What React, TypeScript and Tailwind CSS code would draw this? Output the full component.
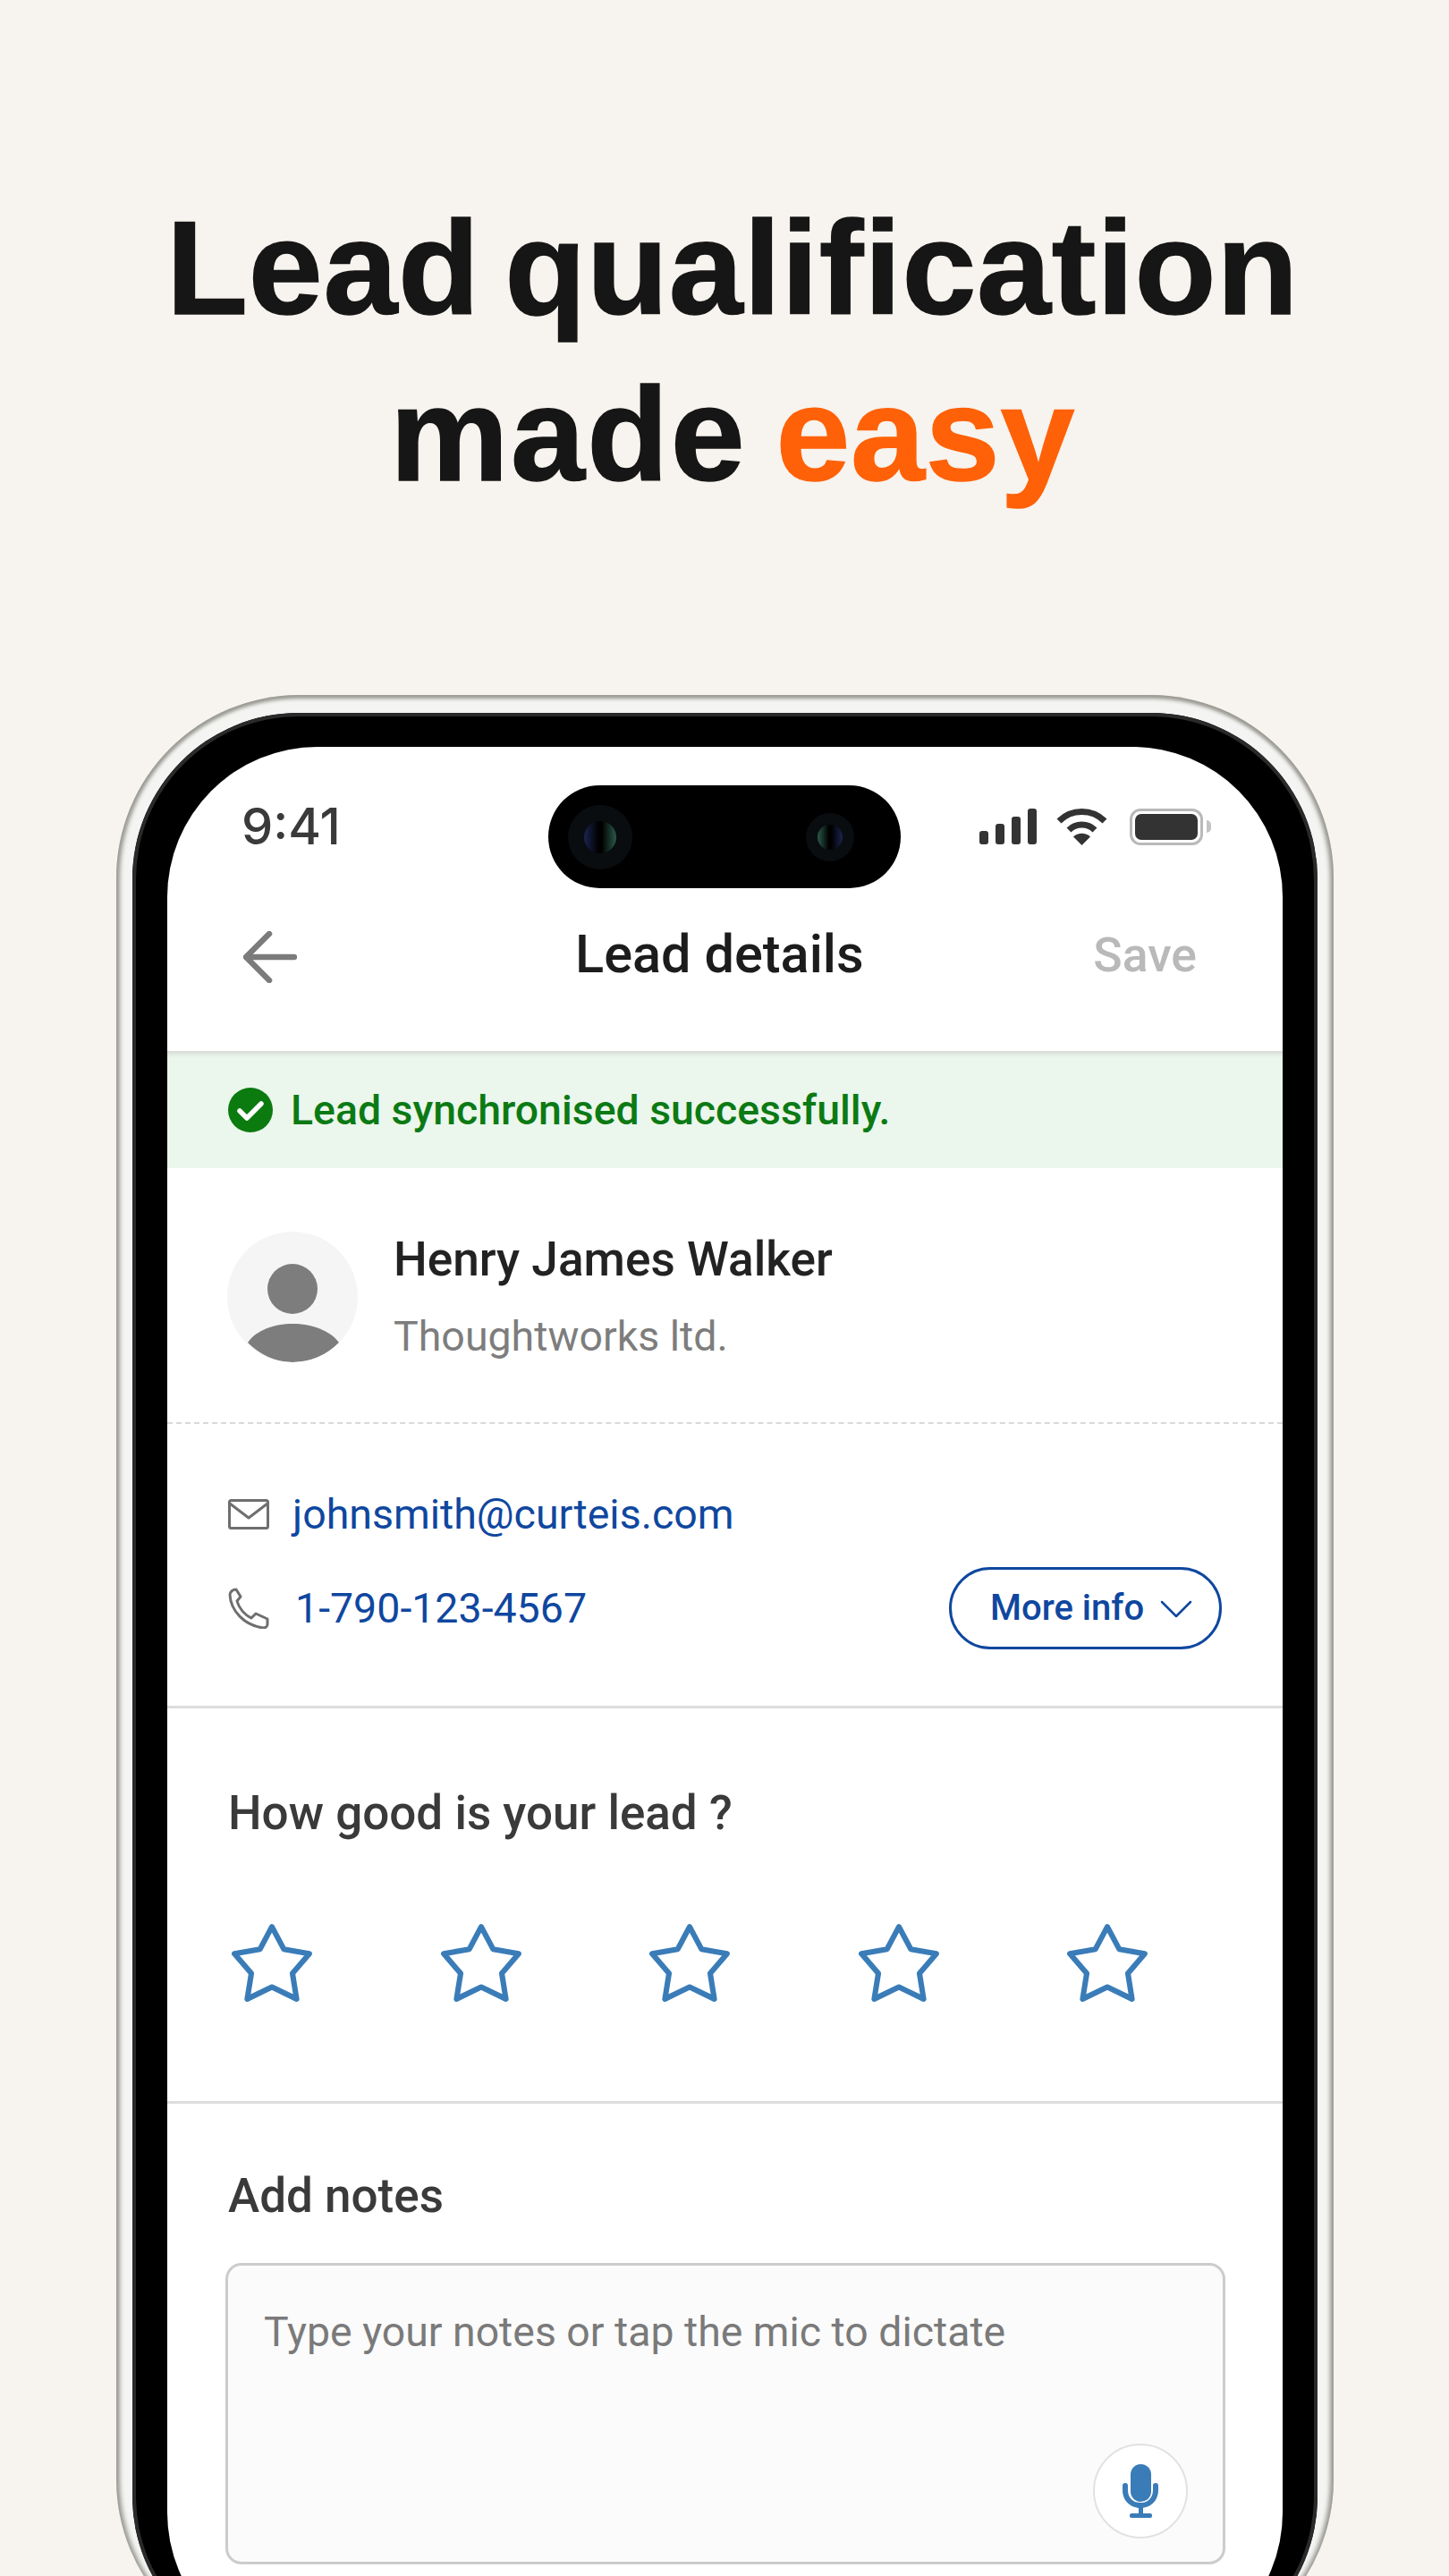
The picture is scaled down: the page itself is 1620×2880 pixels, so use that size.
const roboto = "font-['Roboto',sans-serif]";

const StatusIcons = () => (
  <div className="flex items-center">
    <svg width="64" height="40" viewBox="0 0 64 40" fill="#333">
      <rect x="0" y="25" width="10" height="15" rx="3" />
      <rect x="18" y="17" width="10" height="23" rx="3" />
      <rect x="36" y="9" width="10" height="31" rx="3" />
      <rect x="54" y="0" width="10" height="40" rx="3" />
    </svg>
    <svg className="ml-[22px]" width="57" height="41" viewBox="0 0 57 41" fill="none" stroke="#333" strokeWidth="7">
      <path d="M3 14C17 0 40 0 54 14" />
      <path d="M14 24C22 16 35 16 43 24" />
      <path d="M28.5 41L19 31.5C24 26.5 33 26.5 38 31.5Z" fill="#333" stroke="none" />
    </svg>
    <div className="ml-[25px] w-[82px] h-[41px] rounded-[12px] border-[3px] border-[#b9b9b9] p-[3px]">
      <div className="w-full h-full rounded-[7px] bg-[#333]" />
    </div>
    <div className="ml-[4px] w-[5px] h-[14px] rounded-r-full bg-[#c4c4c4]" />
  </div>
);

const BackArrow = () => (
  <svg width="60" height="58" viewBox="0 0 60 58" fill="none" stroke="#7b7b7b" strokeWidth="6.5" strokeLinecap="round" strokeLinejoin="round">
    <path d="M57 29H4" />
    <path d="M29 3L3 29L29 55" />
  </svg>
);

const CheckBadge = () => (
  <svg width="50" height="50" viewBox="0 0 50 50">
    <circle cx="25" cy="25" r="25" fill="#0b7a0f" />
    <path d="M13 26L21 34L37 18" fill="none" stroke="#fff" strokeWidth="5.5" strokeLinecap="round" strokeLinejoin="round" />
  </svg>
);

const Avatar = () => (
  <div className="w-[146px] h-[146px] rounded-full bg-[#f5f5f5] overflow-hidden shrink-0">
    <svg width="146" height="146" viewBox="0 0 146 146" fill="#7d7d7d">
      <circle cx="73" cy="64" r="28" />
      <path d="M23 124C42 96 104 96 125 124C112 137 94 146 73 146C54 146 36 137 23 124Z" />
    </svg>
  </div>
);

const MailIcon = () => (
  <svg width="46" height="34" viewBox="0 0 46 34" fill="none" stroke="#6f6f6f" strokeWidth="3" strokeLinejoin="round">
    <rect x="1.5" y="1.5" width="43" height="31" rx="2" />
    <path d="M2 5L23 21L44 5" />
  </svg>
);

const PhoneIcon = () => (
  <svg width="46" height="46" viewBox="0 0 46 46" fill="none" stroke="#6f6f6f" strokeWidth="3" strokeLinejoin="round">
    <path d="M2 8C2 5 5 2 9 2L14 10L10 15C12 23 19 31 26 34L31 29L44 35V41C44 43 42 45 39 45C18 42 3 26 2 8Z" />
  </svg>
);

const ChevronIcon = () => (
  <svg width="36" height="20" viewBox="0 0 36 20" fill="none" stroke="#0f479f" strokeWidth="2.5" strokeLinecap="round" strokeLinejoin="round">
    <path d="M2 2L18 18L34 2" />
  </svg>
);

const StarIcon = () => (
  <svg width="94" height="88" viewBox="0 0 92 86" fill="none" stroke="#3a7cb8" strokeWidth="6" strokeLinejoin="round">
    <path d="M46 4L59 28.5L87 33.5L68.5 55L73 83L46 70L19 83L23.5 55L5 33.5L33 28.5Z" />
  </svg>
);

const MicIcon = () => (
  <svg width="40" height="60" viewBox="0 0 40 60" fill="#3a7cb8">
    <rect x="9" y="0" width="23" height="42" rx="11.5" />
    <path d="M3 24V29C3 39 10 46 20 46C30 46 37 39 37 29V24" fill="none" stroke="#3a7cb8" strokeWidth="6" strokeLinecap="round" />
    <rect x="18" y="45" width="5" height="12" />
    <rect x="8" y="55" width="25" height="5" rx="2" />
  </svg>
);

const App = () => {
  return (
    <div className="w-[1620px] h-[2880px] overflow-hidden bg-[#f7f3ee]">
      <h1 className="pt-[207px] pl-[18px] text-center text-[149px] leading-[186px] font-bold tracking-[0.8px] [-webkit-text-stroke:1.5px_#161616] font-['Liberation_Sans',sans-serif] text-[#161616]">
        <span className="[word-spacing:-15px]">Lead qualification</span>
        <br />
        <span className="[word-spacing:-10px]">
          <span className="tracking-[2.5px]">made</span> <span className="text-[#ff6108] [-webkit-text-stroke:1.5px_#ff6108]">easy</span>
        </span>
      </h1>

      <div className="mt-[198px] ml-[130px] w-[1361px] h-[2200px] rounded-[205px] pt-[20px] px-[18px] bg-[#f4f5f3] shadow-[inset_0_5px_4px_-1px_#9a9a92,inset_5px_0_5px_-1px_#9a9a92,inset_-5px_0_5px_-1px_#9a9a92]">
        <div className="h-full rounded-[186px] pt-[38px] px-[39px] bg-black shadow-[inset_0_0_0_4px_#2a2a2a]">
          <div className={`relative h-full rounded-[168px] bg-white overflow-hidden ${roboto}`}>
            <div className="absolute left-[426px] top-[43px] w-[394px] h-[115px] rounded-full bg-black flex items-center justify-between pl-[22px] pr-[52px]">
              <div className="w-[72px] h-[72px] rounded-full bg-[#0a0d10] flex items-center justify-center">
                <div className="w-[36px] h-[36px] rounded-full bg-[linear-gradient(90deg,#1a2450,#000_45%,#000_55%,#2a5a4a)]" />
              </div>
              <div className="w-[54px] h-[54px] rounded-full bg-[#0a0d10] flex items-center justify-center">
                <div className="w-[28px] h-[28px] rounded-full bg-[linear-gradient(90deg,#2a5a4a,#000_45%,#000_55%,#1a2450)]" />
              </div>
            </div>

            <div className="flex items-center justify-between pt-[68px] pl-[83px] pr-[80px] h-[110px]">
              <span className="text-[56px] leading-[42px] font-medium font-['Inter',sans-serif] text-[#3a3a3a]">9:41</span>
              <StatusIcons />
            </div>

            <div className="flex items-center mt-[65px] h-[120px] pl-[85px] pr-[96px] mb-[45px]">
              <BackArrow />
              <span className="ml-[311px] -mt-[5px] text-[59.5px] font-medium text-[#1c1c1c]">Lead details</span>
              <span className="ml-auto -mt-[4px] text-[53.5px] font-medium text-[#b9b9b9]">Save</span>
            </div>

            <div className="flex items-center h-[131px] pl-[68px] bg-[#ebf6ec] shadow-[inset_0_6px_5px_-3px_#d3d8d3]">
              <CheckBadge />
              <span className="ml-[20px] mt-[2px] text-[46.4px] font-medium text-[#0b7a14]">Lead synchronised successfully.</span>
            </div>

            <div className="flex pt-[71px] pl-[67px] h-[286px] border-b-2 border-dashed border-[#d9d9d9]">
              <Avatar />
              <div className="ml-[40px]">
                <div className="text-[53.2px] leading-[62px] font-medium text-[#222]">Henry James Walker</div>
                <div className="mt-[27px] text-[46.5px] leading-[56px] text-[#7d7d7d]">Thoughtworks ltd.</div>
              </div>
            </div>

            <div className="h-[318px] border-b-[3px] border-[#dddddd] pl-[68px] pr-[68px]">
              <div className="flex items-center pt-[71px]">
                <MailIcon />
                <span className="ml-[26px] text-[46.5px] leading-[60px] text-[#0f479f]">johnsmith@curteis.com</span>
              </div>
              <div className="flex items-center mt-[29px]">
                <PhoneIcon />
                <span className="ml-[29px] text-[46.5px] leading-[60px] text-[#0f479f]">1-790-123-4567</span>
                <div className="ml-auto flex items-center w-[305px] h-[92px] pl-[43px] rounded-full border-[3px] border-[#0f479f] text-[40px] font-medium text-[#0f479f]">
                  More info
                  <div className="ml-[18px] mt-[2px]">
                    <ChevronIcon />
                  </div>
                </div>
              </div>
            </div>

            <div className="h-[442px] border-b-[3px] border-[#dddddd] pl-[68px]">
              <div className="pt-[87px] text-[53px] leading-[60px] font-medium text-[#3a3a3a]">How good is your lead ?</div>
              <div className="flex gap-[139.5px] mt-[93px] ml-[2px]">
                <StarIcon />
                <StarIcon />
                <StarIcon />
                <StarIcon />
                <StarIcon />
              </div>
            </div>

            <div className="pl-[65px] pr-[64px]">
              <div className="pt-[73px] pl-[3px] text-[53px] leading-[60px] font-medium text-[#3a3a3a]">Add notes</div>
              <div className="relative mt-[45px] h-[337px] rounded-[18px] border-[3px] border-[#cccccc] bg-[#fbfbfb] pl-[40px] pt-[44px]">
                <span className="text-[46.4px] leading-[60px] text-[#7a7a7a]">Type your notes or tap the mic to dictate</span>
                <div className="absolute right-[39px] bottom-[26px] w-[106px] h-[106px] rounded-full border-2 border-[#e2e2e2] bg-white flex items-center justify-center">
                  <MicIcon />
                </div>
              </div>
            </div>
          </div>
        </div>
      </div>
    </div>
  );
};

export default App;
